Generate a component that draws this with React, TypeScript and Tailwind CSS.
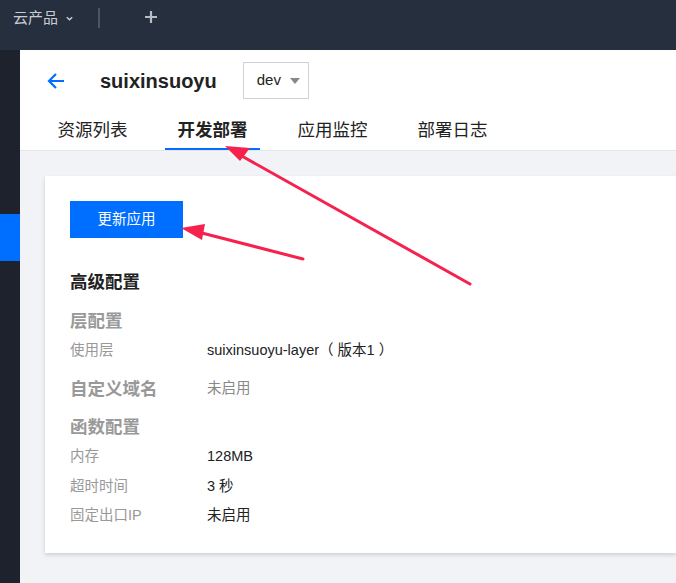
import React from 'react';

const font = "font-['Liberation_Sans','Noto_Sans_CJK_SC',sans-serif]";

const tabs = ['资源列表', '开发部署', '应用监控', '部署日志'];

const Row = ({ label, value, muted }: { label: string; value: string; muted?: boolean }) => (
    <div className="flex items-center h-[29.5px]">
        <span className="w-[137px] text-[14.5px] text-[#999]">{label}</span>
        <span className={`text-[14.5px] whitespace-pre ${muted ? 'text-[#888]' : 'text-[#222]'}`}>{value}</span>
    </div>
);

const App = () => {
    return (
        <div className={`relative w-[676px] h-[583px] overflow-hidden flex flex-col ${font}`}>
            <header className="h-[50px] shrink-0 bg-[#262f3e] flex items-start pt-[8px]">
                <div className="flex items-center h-[20px] pl-[13px] text-[15px] text-[#c9ccd2]">
                    <span>云产品</span>
                    <svg className="ml-[7px]" width="9" height="9" viewBox="0 0 10 10">
                        <path d="M2 3.5 L5 6.5 L8 3.5" fill="none" stroke="#c9ccd2" strokeWidth="1.6" />
                    </svg>
                </div>
                <div className="ml-[24px] w-[2px] h-[20px] bg-[#4b5563]" />
                <svg className="ml-[44px] mt-[2px]" width="14" height="14" viewBox="0 0 14 14">
                    <path d="M7 1 V13 M1 7 H13" stroke="#b8bcc4" strokeWidth="2.2" />
                </svg>
            </header>
            <div className="flex flex-1">
                <aside className="w-[20px] bg-[#1e222d] flex flex-col">
                    <div className="mt-[164px] h-[47px] bg-[#006eff]" />
                </aside>
                <main className="flex-1 bg-[#f2f3f7] flex flex-col">
                    <div className="bg-white border-b border-[#e5e6ea]">
                        <div className="flex items-center pt-[6px] pl-[27px] h-[49px] box-content">
                            <svg width="18" height="18" viewBox="0 0 18 18">
                                <path d="M17 9 H2 M9 2 L2 9 L9 16" fill="none" stroke="#006eff" strokeWidth="2.2" />
                            </svg>
                            <h1 className="ml-[35px] text-[20px] font-bold text-[#222]">suixinsuoyu</h1>
                            <div className="ml-[26px] w-[66px] h-[37px] border border-[#cfd2d8] flex items-center pl-[13px] gap-[9px]">
                                <span className="text-[15px] text-[#222]">dev</span>
                                <svg width="10" height="6" viewBox="0 0 10 6">
                                    <path d="M0 0 H10 L5 6 Z" fill="#888" />
                                </svg>
                            </div>
                        </div>
                        <nav className="flex ml-[25px] mt-[7px] gap-[25px]">
                            {tabs.map((t, i) => (
                                <div
                                    key={t}
                                    className={`w-[95px] h-[38px] flex items-center justify-center text-[17.5px] border-b-2 ${
                                        i === 1 ? 'border-[#006eff] font-bold text-[#222]' : 'border-transparent text-[#222]'
                                    }`}
                                >
                                    {t}
                                </div>
                            ))}
                        </nav>
                    </div>
                    <div className="pl-[25px] pt-[25px]">
                        <section className="bg-white shadow-[0_2px_4px_rgba(0,0,0,0.15)] pl-[25px] pt-[25px] pb-[24px] h-[377px]">
                            <button className="w-[113px] h-[37px] bg-[#006eff] text-white text-[14.5px]">更新应用</button>
                            <h2 className="mt-[32px] text-[17.5px] font-bold text-[#222] leading-[24px]">高级配置</h2>
                            <h3 className="mt-[15px] text-[17.5px] font-bold text-[#999] leading-[24px]">层配置</h3>
                            <div className="mt-[3px]">
                                <Row label="使用层" value="suixinsuoyu-layer（ 版本1 ）" />
                            </div>
                            <div className="flex items-center h-[47px]">
                                <span className="w-[137px] text-[17.5px] font-bold text-[#999]">自定义域名</span>
                                <span className="text-[14.5px] text-[#888]">未启用</span>
                            </div>
                            <h3 className="mt-[2px] text-[17.5px] font-bold text-[#999] leading-[24px]">函数配置</h3>
                            <div className="mt-[4px]">
                                <Row label="内存" value="128MB" />
                                <Row label="超时时间" value="3 秒" />
                                <Row label="固定出口IP" value="未启用" />
                            </div>
                        </section>
                    </div>
                </main>
            </div>
            <svg className="absolute inset-0 pointer-events-none" width="676" height="583" viewBox="0 0 676 583">
                <g stroke="#f5224d" strokeWidth="3" strokeLinecap="round">
                    <line x1="470" y1="284" x2="240" y2="155" />
                    <line x1="303" y1="259" x2="198" y2="232" />
                </g>
                <g fill="#f5224d">
                    <path d="M225 146 L250 148 L240 161 Z" />
                    <path d="M181 228 L205 224 L202 240 Z" />
                </g>
            </svg>
        </div>
    );
};

export default App;
